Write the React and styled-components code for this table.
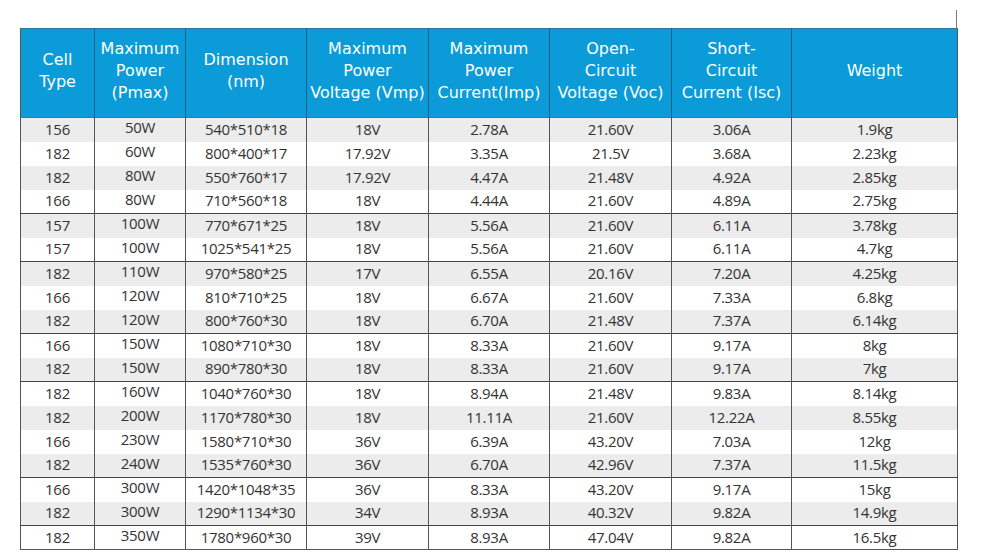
import React from 'react';
import styled, { createGlobalStyle } from 'styled-components';

const GlobalStyle = createGlobalStyle`
    html, body {
        margin: 0;
        padding: 0;
        background: #fff;
    }
    body {
        font-family: "Open Sans", "Liberation Sans", sans-serif;
    }
`;

const Page = styled.div`
    width: 1000px;
    height: 553px;
    overflow: hidden;
    display: flex;
    flex-direction: column;
    padding: 10px 0 0 20px;
    box-sizing: border-box;
`;

const Tick = styled.div`
    flex: none;
    align-self: flex-start;
    margin-left: 936px;
    width: 1px;
    height: 18px;
    background: #7a7a7a;
`;

const SpecTable = styled.table`
    flex: none;
    width: 938px;
    table-layout: fixed;
    border-collapse: collapse;
    border-left: 1px solid #555;
    border-right: 1px solid #555;
`;

const HeadRow = styled.tr`
    background: #0a9bd8;
    border-top: 1px solid #2a78a6;
    border-bottom: 1px solid #5a6f7c;
`;

const HeadCell = styled.th`
    height: 89px;
    box-sizing: border-box;
    color: #fff;
    font-family: "DejaVu Sans", "Open Sans", sans-serif;
    font-weight: 400;
    font-size: 16px;
    line-height: 22px;
    text-align: center;
    vertical-align: middle;
    padding: 0 0 4px;
    border-left: 1px solid #1d5f86;
    white-space: nowrap;
    &:first-child {
        border-left: none;
    }
`;

const BodyRow = styled.tr`
    background: ${p => (p.$striped ? '#ececec' : '#fff')};
    border-top: ${p => (p.$divider ? '1px solid #444' : 'none')};
    &:last-child {
        border-bottom: 1px solid #555;
    }
`;

const Cell = styled.td`
    height: 24px;
    box-sizing: border-box;
    color: #333;
    font-size: 15px;
    letter-spacing: -0.3px;
    line-height: 19px;
    text-align: center;
    vertical-align: middle;
    padding: ${p => (p.$raised ? '0 0 4px' : '0 0 1px')};
    border-left: 1px solid #555;
    white-space: nowrap;
    overflow: hidden;
    &:first-child {
        border-left: none;
    }
`;

const widths = [74, 91, 121, 122, 121, 122, 120, 166];

const headers = [
    ['Cell', 'Type'],
    ['Maximum', 'Power', '(Pmax)'],
    ['Dimension', '(nm)'],
    ['Maximum', 'Power', 'Voltage (Vmp)'],
    ['Maximum', 'Power', 'Current(Imp)'],
    ['Open-', 'Circuit', 'Voltage (Voc)'],
    ['Short-', 'Circuit', 'Current (Isc)'],
    ['Weight'],
];

// first row of each group gets a dark line above it
const rows = [
    ['156', '50W', '540*510*18', '18V', '2.78A', '21.60V', '3.06A', '1.9kg'],
    ['182', '60W', '800*400*17', '17.92V', '3.35A', '21.5V', '3.68A', '2.23kg'],
    ['182', '80W', '550*760*17', '17.92V', '4.47A', '21.48V', '4.92A', '2.85kg'],
    ['166', '80W', '710*560*18', '18V', '4.44A', '21.60V', '4.89A', '2.75kg'],
    ['157', '100W', '770*671*25', '18V', '5.56A', '21.60V', '6.11A', '3.78kg', true],
    ['157', '100W', '1025*541*25', '18V', '5.56A', '21.60V', '6.11A', '4.7kg'],
    ['182', '110W', '970*580*25', '17V', '6.55A', '20.16V', '7.20A', '4.25kg', true],
    ['166', '120W', '810*710*25', '18V', '6.67A', '21.60V', '7.33A', '6.8kg'],
    ['182', '120W', '800*760*30', '18V', '6.70A', '21.48V', '7.37A', '6.14kg'],
    ['166', '150W', '1080*710*30', '18V', '8.33A', '21.60V', '9.17A', '8kg', true],
    ['182', '150W', '890*780*30', '18V', '8.33A', '21.60V', '9.17A', '7kg'],
    ['182', '160W', '1040*760*30', '18V', '8.94A', '21.48V', '9.83A', '8.14kg', true],
    ['182', '200W', '1170*780*30', '18V', '11.11A', '21.60V', '12.22A', '8.55kg'],
    ['166', '230W', '1580*710*30', '36V', '6.39A', '43.20V', '7.03A', '12kg'],
    ['182', '240W', '1535*760*30', '36V', '6.70A', '42.96V', '7.37A', '11.5kg'],
    ['166', '300W', '1420*1048*35', '36V', '8.33A', '43.20V', '9.17A', '15kg', true],
    ['182', '300W', '1290*1134*30', '34V', '8.93A', '40.32V', '9.82A', '14.9kg'],
    ['182', '350W', '1780*960*30', '39V', '8.93A', '47.04V', '9.82A', '16.5kg', true],
];

const App = () => {
    return (
        <>
            <GlobalStyle />
            <Page>
                <Tick />
                <SpecTable>
                    <colgroup>
                        {widths.map((w, i) => (
                            <col key={i} style={{ width: w }} />
                        ))}
                    </colgroup>
                    <thead>
                        <HeadRow>
                            {headers.map((lines, i) => (
                                <HeadCell key={i}>
                                    {lines.map((l, j) => (
                                        <React.Fragment key={j}>
                                            {j > 0 && <br />}
                                            {l}
                                        </React.Fragment>
                                    ))}
                                </HeadCell>
                            ))}
                        </HeadRow>
                    </thead>
                    <tbody>
                        {rows.map((r, i) => (
                            <BodyRow key={i} $striped={i % 2 === 0} $divider={r[8]}>
                                {r.slice(0, 8).map((v, j) => (
                                    <Cell key={j} $raised={j === 1}>
                                        {v}
                                    </Cell>
                                ))}
                            </BodyRow>
                        ))}
                    </tbody>
                </SpecTable>
            </Page>
        </>
    );
};

export default App;
